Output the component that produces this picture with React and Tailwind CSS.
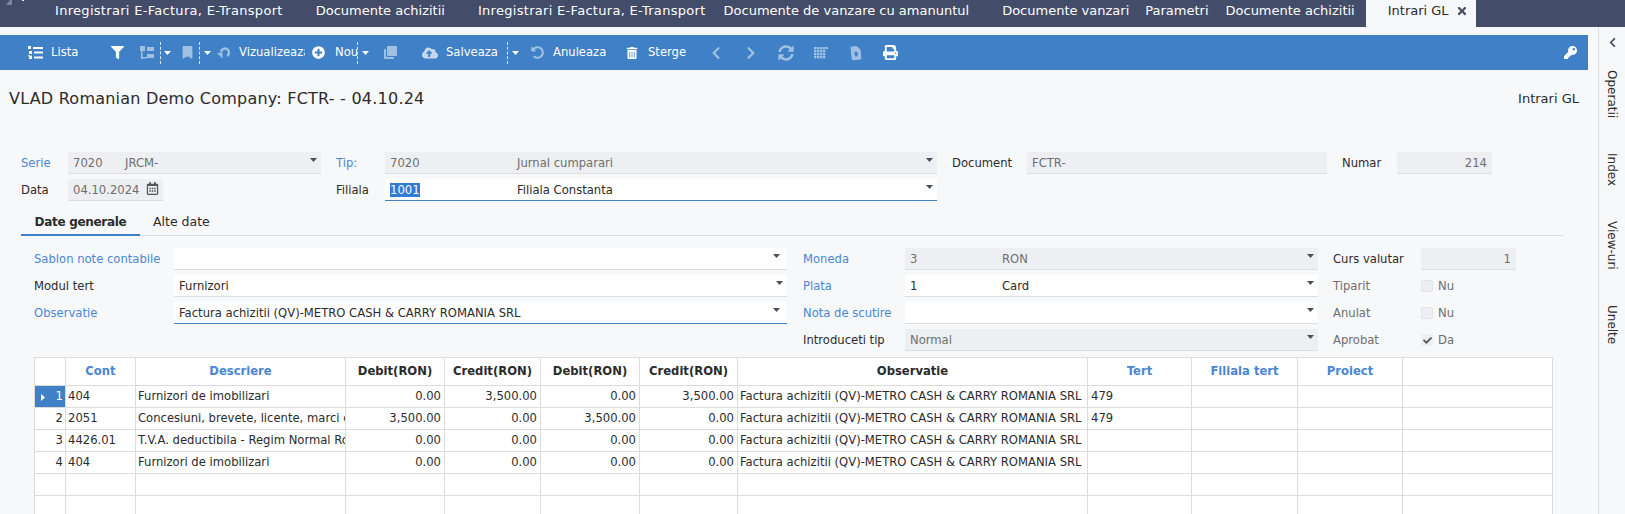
import {
  FaBookmark,
  FaChevronLeft,
  FaChevronRight,
  FaCheck,
  FaFilter,
  FaKey,
  FaPlusCircle,
  FaPrint,
  FaCloudUploadAlt,
  FaSyncAlt,
  FaTimes,
  FaTrashAlt,
  FaUndoAlt,
  FaRegCalendarAlt,
} from "react-icons/fa";

const Caret = ({ className = "text-[#4a4f5c]" }) => (
  <svg width="7" height="4" viewBox="0 0 7 4" className={className}>
    <path d="M0 0h7L3.5 4z" fill="currentColor" />
  </svg>
);

const DashedSep = () => <span className="h-[22px] border-l border-dashed border-white/80" />;

const ListIcon = () => (
  <svg width="15" height="13" viewBox="0 0 15 13" fill="white">
    <rect x="0" y="0" width="3" height="3" />
    <rect x="5" y="1" width="10" height="2" />
    <rect x="1" y="5" width="3" height="3" />
    <rect x="6" y="5.500" width="9" height="2" />
    <path d="M0 8.500l3 1.500 1-1v4H0.500l1-1z" />
    <rect x="6" y="10.500" width="9" height="2" />
  </svg>
);

const TreeIcon = () => (
  <svg width="14" height="13" viewBox="0 0 14 13" fill="#9fc0e3">
    <rect x="0" y="0" width="5" height="5" />
    <rect x="7" y="1" width="7" height="4" />
    <rect x="1" y="5" width="1.500" height="8" />
    <rect x="1" y="11" width="6" height="1.500" />
    <rect x="7" y="8" width="7" height="4" />
  </svg>
);

const RedoIcon = () => (
  <svg width="13" height="13" viewBox="0 0 13 13" fill="none">
    <path d="M4 6.500a4 4 0 1 1 6 3.500" stroke="#9fc0e3" strokeWidth="2.400" />
    <path d="M0 7h5.500v5.500z" fill="#9fc0e3" />
  </svg>
);

const CloneIcon = () => (
  <svg width="13" height="13" viewBox="0 0 13 13" fill="#9fc0e3">
    <path d="M4 0h8a1 1 0 0 1 1 1v8a1 1 0 0 1-1 1H4a1 1 0 0 1-1-1V1a1 1 0 0 1 1-1z" />
    <path d="M0 4a1 1 0 0 1 1-1h1v7a1 1 0 0 0 1 1h7v1a1 1 0 0 1-1 1H1a1 1 0 0 1-1-1z" />
  </svg>
);

const GridIcon = () => (
  <svg width="14" height="12" viewBox="0 0 14 12" fill="#9fc0e3">
    {[0, 3, 6, 9].map((y) =>
      [0, 3, 6, 9].map((x) => <rect key={`${x}-${y}`} x={x} y={y} width="2.400" height="2.400" />)
    )}
    <rect x="12" y="0" width="2" height="2" />
  </svg>
);

const DocIcon = () => (
  <svg width="10" height="14" viewBox="0 0 10 14" fill="#9fc0e3" className="-rotate-6">
    <path d="M0 0h6l4 4v10H0z" />
    <path d="M5 5l2.500 3.500H6v2H4v-2H2.500z" fill="#3f80c6" />
  </svg>
);

const rows = [
  ["1", "404", "Furnizori de imobilizari", "0.00", "3,500.00", "0.00", "3,500.00", "479"],
  ["2", "2051", "Concesiuni, brevete, licente, marci comerciale", "3,500.00", "0.00", "3,500.00", "0.00", "479"],
  ["3", "4426.01", "T.V.A. deductibila - Regim Normal Romania", "0.00", "0.00", "0.00", "0.00", ""],
  ["4", "404", "Furnizori de imobilizari", "0.00", "0.00", "0.00", "0.00", ""],
];

const obs = "Factura achizitii (QV)-METRO CASH & CARRY ROMANIA SRL";

const Label = ({ className = "", children }) => <span className={`self-center pt-[2px] ${className}`}>{children}</span>;

const Field = ({ value, second, secondLeft, width, white, caret, caretPos = "right-[4px]", active, right }) => (
  <div
    className={`relative flex h-[22px] items-center border-b px-[5px] pt-[2px] ${width} ${
      active ? "border-[#3f80c6]" : "border-[#dcdee3]"
    } ${white ? "bg-white text-[#2b2b2b]" : "bg-[#eeeff2] text-[#6e6e6e]"} ${right ? "justify-end" : ""}`}
  >
    <span className="whitespace-nowrap">{value}</span>
    {second && <span className={`absolute top-[3px] whitespace-nowrap ${secondLeft}`}>{second}</span>}
    {caret && (
      <span className={`absolute top-[6px] ${caretPos}`}>
        <Caret />
      </span>
    )}
  </div>
);

const Check = ({ label, checked }) => (
  <div className="flex items-center gap-[5px] text-[#6e6e6e]">
    <span
      className={`flex h-[12px] w-[12px] items-center justify-center rounded-[2px] bg-[#eeeff2] ${
        checked ? "" : "border border-[#e2e3e6]"
      }`}
    >
      {checked && <FaCheck className="text-[9px] text-[#555]" />}
    </span>
    <span className="pt-[2px]">{label}</span>
  </div>
);

export default function App() {
  return (
    <div className="flex h-[514px] w-[1625px] flex-col overflow-hidden bg-[#f7f8fa] font-['DejaVu_Sans',sans-serif] text-[11.600px] text-[#2b2b2b]">
      <div className="relative flex h-[27px] shrink-0 items-center bg-[#434d69] text-[13px] text-white">
        <svg width="20" height="5" viewBox="0 0 20 5" className="absolute left-[5px] top-0">
          <path d="M1 5l4-5h2v5z" fill="#7d859b" />
          <rect x="17" y="0" width="2" height="1" fill="#e8e9ee" />
        </svg>
        <span className="mb-[5px] ml-[55px] tracking-[0.300px]">Inregistrari E-Factura, E-Transport</span>
        <span className="mb-[5px] ml-[33px]">Documente achizitii</span>
        <span className="mb-[5px] ml-[33px] tracking-[0.300px]">Inregistrari E-Factura, E-Transport</span>
        <span className="mb-[5px] ml-[18px]">Documente de vanzare cu amanuntul</span>
        <span className="mb-[5px] ml-[33px]">Documente vanzari</span>
        <span className="mb-[5px] ml-[16px]">Parametri</span>
        <span className="mb-[5px] ml-[17px]">Documente achizitii</span>
        <div className="ml-[11px] flex h-full w-[110px] items-center bg-[#f7f8fa] pb-[5px] pl-[22px] text-[#2b2b2b]">
          Intrari GL
          <FaTimes className="ml-[7px] text-[12px] text-[#4a5060]" />
        </div>
      </div>

      <div className="flex min-h-0 flex-1">
        <div className="min-w-0 flex-1">
          <div className="mt-[8px] flex h-[35px] w-[1588px] items-center bg-[#3f80c6] text-white">
            <span className="ml-[28px]"><ListIcon /></span>
            <span className="ml-[8px] w-[26px]">Lista</span>
            <FaFilter className="ml-[34px] text-[13px]" />
            <span className="ml-[16px]"><TreeIcon /></span>
            <span className="ml-[6px] flex"><DashedSep /></span>
            <span className="ml-[3px]"><Caret className="text-white" /></span>
            <FaBookmark className="ml-[10px] text-[13px] text-[#9fc0e3]" />
            <span className="ml-[5px] flex"><DashedSep /></span>
            <span className="ml-[4px]"><Caret className="text-white" /></span>
            <span className="ml-[6px]"><RedoIcon /></span>
            <span className="ml-[9px] w-[66px] overflow-hidden whitespace-nowrap">Vizualizeaza</span>
            <FaPlusCircle className="ml-[7px] text-[13px]" />
            <span className="ml-[10px] w-[22px] overflow-hidden">Nou</span>
            <span className="flex"><DashedSep /></span>
            <span className="ml-[4px]"><Caret className="text-white" /></span>
            <span className="ml-[15px]"><CloneIcon /></span>
            <FaCloudUploadAlt className="ml-[25px] text-[16px] text-[#c5d9ee]" />
            <span className="ml-[8px] w-[51px]">Salveaza</span>
            <span className="ml-[10px] flex"><DashedSep /></span>
            <span className="ml-[4px]"><Caret className="text-white" /></span>
            <FaUndoAlt className="ml-[12px] text-[13px] text-[#9fc0e3]" />
            <span className="ml-[9px] w-[52px] whitespace-nowrap">Anuleaza</span>
            <FaTrashAlt className="ml-[21px] text-[12px]" />
            <span className="ml-[10px] w-[37px]">Sterge</span>
            <FaChevronLeft className="ml-[24px] text-[14px] text-[#9fc0e3]" />
            <FaChevronRight className="ml-[21px] text-[14px] text-[#9fc0e3]" />
            <FaSyncAlt className="ml-[20px] text-[16px] text-[#9fc0e3]" />
            <span className="ml-[20px]"><GridIcon /></span>
            <span className="ml-[23px]"><DocIcon /></span>
            <FaPrint className="ml-[22px] text-[15px]" />
            <FaKey className="ml-auto mr-[11px] text-[13px]" />
          </div>

          <div className="mt-[18px] flex items-center justify-between pl-[9px] pr-[19px]">
            <h1 className="text-[16px] font-normal leading-[22px] tracking-[0.230px]">VLAD Romanian Demo Company: FCTR- - 04.10.24</h1>
            <span className="text-[13px]">Intrari GL</span>
          </div>

          <div className="mt-[42px] flex items-center pl-[21px]">
            <Label className="w-[47px] text-[#4a86d4]">Serie</Label>
            <Field value="7020" second="JRCM-" secondLeft="left-[57px]" width="w-[253px]" caret />
            <Label className="ml-[15px] w-[49px] text-[#4a86d4]">Tip:</Label>
            <Field value="7020" second="Jurnal cumparari" secondLeft="left-[132px]" width="w-[552px]" caret />
            <Label className="ml-[15px] w-[75px]">Document</Label>
            <Field value="FCTR-" width="w-[300px]" />
            <Label className="ml-[15px] w-[55px]">Numar</Label>
            <Field value="214" width="w-[95px]" right />
          </div>
          <div className="mt-[5px] flex items-center pl-[21px]">
            <Label className="w-[47px]">Data</Label>
            <div className="relative">
              <Field value="04.10.2024" width="w-[95px]" />
              <FaRegCalendarAlt className="absolute right-[4px] top-[3px] text-[13px] text-[#555]" />
            </div>
            <Label className="ml-[173px] w-[49px]">Filiala</Label>
            <Field
              value={<span className="bg-[#2f7bd6] text-white">1001</span>}
              second="Filiala Constanta"
              secondLeft="left-[132px]"
              width="w-[552px]"
              white
              caret
              active
            />
          </div>

          <div className="ml-[21px] mt-[1px] flex h-[34px] w-[1542px] border-b border-[#dcdee3]">
            <div className="flex h-[34px] w-[119px] items-center justify-center border-b-2 border-[#3f80c6] pt-[7px] text-[12px] font-bold tracking-[-0.300px]">Date generale</div>
            <div className="ml-[13px] flex h-[33px] items-center pt-[7px] text-[12.500px]">Alte date</div>
          </div>

          <div className="mt-[12px] grid grid-cols-[140px_613px_16px_102px_413px_15px_88px_95px] gap-y-[5px] pl-[34px]">
            <Label className="text-[#4a86d4]">Sablon note contabile</Label>
            <Field width="w-full" white caret caretPos="right-[7px]" />
            <span />
            <Label className="text-[#4a86d4]">Moneda</Label>
            <Field value="3" second="RON" secondLeft="left-[97px]" width="w-full" caret />
            <span />
            <Label>Curs valutar</Label>
            <Field value="1" width="w-full" right />

            <Label>Modul tert</Label>
            <Field value="Furnizori" width="w-full" white caret />
            <span />
            <Label className="text-[#4a86d4]">Plata</Label>
            <Field value="1" second="Card" secondLeft="left-[97px]" width="w-full" white caret />
            <span />
            <Label className="text-[#6e6e6e]">Tiparit</Label>
            <Check label="Nu" />

            <Label className="text-[#4a86d4]">Observatie</Label>
            <Field value={obs} width="w-full" white caret caretPos="right-[7px]" active />
            <span />
            <Label className="text-[#4a86d4]">Nota de scutire</Label>
            <Field width="w-full" white caret />
            <span />
            <Label className="text-[#6e6e6e]">Anulat</Label>
            <Check label="Nu" />

            <span />
            <span />
            <span />
            <Label>Introduceti tip</Label>
            <Field value="Normal" width="w-full" caret />
            <span />
            <Label className="text-[#6e6e6e]">Aprobat</Label>
            <Check label="Da" checked />
          </div>

          <table className="ml-[34px] mt-[6px] w-[1519px] table-fixed border-collapse bg-white">
            <colgroup>
              <col className="w-[31px]" />
              <col className="w-[70px]" />
              <col className="w-[210px]" />
              <col className="w-[99px]" />
              <col className="w-[96px]" />
              <col className="w-[99px]" />
              <col className="w-[98px]" />
              <col className="w-[350px]" />
              <col className="w-[104px]" />
              <col className="w-[106px]" />
              <col className="w-[105px]" />
              <col />
            </colgroup>
            <thead>
              <tr className="h-[28px] font-bold">
                <th className="border border-[#dcdcdc]" />
                <th className="border border-[#dcdcdc] text-[#4a86d4]">Cont</th>
                <th className="border border-[#dcdcdc] text-[#4a86d4]">Descriere</th>
                <th className="border border-[#dcdcdc]">Debit(RON)</th>
                <th className="border border-[#dcdcdc]">Credit(RON)</th>
                <th className="border border-[#dcdcdc]">Debit(RON)</th>
                <th className="border border-[#dcdcdc]">Credit(RON)</th>
                <th className="border border-[#dcdcdc]">Observatie</th>
                <th className="border border-[#dcdcdc] text-[#4a86d4]">Tert</th>
                <th className="border border-[#dcdcdc] text-[#4a86d4]">Filiala tert</th>
                <th className="border border-[#dcdcdc] text-[#4a86d4]">Proiect</th>
                <th className="border border-[#dcdcdc]" />
              </tr>
            </thead>
            <tbody>
              {rows.map((r, i) => (
                <tr key={r[0]} className="h-[22px]">
                  <td className={`border border-[#dcdcdc] pr-[2px] text-right ${i === 0 ? "relative bg-[#3f80c6] text-white" : ""}`}>
                    {i === 0 && (
                      <svg width="4" height="7" viewBox="0 0 4 7" className="absolute left-[6px] top-[8px]">
                        <path d="M0 0l4 3.500-4 3.500z" fill="white" />
                      </svg>
                    )}
                    {r[0]}
                  </td>
                  <td className="border border-[#dcdcdc] px-[2px]">{r[1]}</td>
                  <td className="overflow-hidden whitespace-nowrap border border-[#dcdcdc] px-[2px]">{r[2]}</td>
                  <td className="border border-[#dcdcdc] px-[3px] text-right">{r[3]}</td>
                  <td className="border border-[#dcdcdc] px-[3px] text-right">{r[4]}</td>
                  <td className="border border-[#dcdcdc] px-[3px] text-right">{r[5]}</td>
                  <td className="border border-[#dcdcdc] px-[3px] text-right">{r[6]}</td>
                  <td className="overflow-hidden whitespace-nowrap border border-[#dcdcdc] px-[2px]">{obs}</td>
                  <td className="border border-[#dcdcdc] px-[3px]">{r[7]}</td>
                  <td className="border border-[#dcdcdc]" />
                  <td className="border border-[#dcdcdc]" />
                  <td className="border border-[#dcdcdc]" />
                </tr>
              ))}
              {[5, 6].map((n) => (
                <tr key={n} className="h-[22px]">
                  {Array.from({ length: 12 }).map((_, c) => (
                    <td key={c} className="border border-[#dcdcdc]" />
                  ))}
                </tr>
              ))}
            </tbody>
          </table>
        </div>

        <div className="flex w-[27px] shrink-0 flex-col items-center border-l border-[#dcdee3] text-[12px]">
          <FaChevronLeft className="mt-[10px] text-[11px] text-[#4a5060]" />
          <span className="mt-[22px] [writing-mode:vertical-rl]">Operatii</span>
          <span className="mt-[35px] [writing-mode:vertical-rl]">Index</span>
          <span className="mt-[35px] [writing-mode:vertical-rl]">View-uri</span>
          <span className="mt-[35px] [writing-mode:vertical-rl]">Unelte</span>
        </div>
      </div>
    </div>
  );
}
